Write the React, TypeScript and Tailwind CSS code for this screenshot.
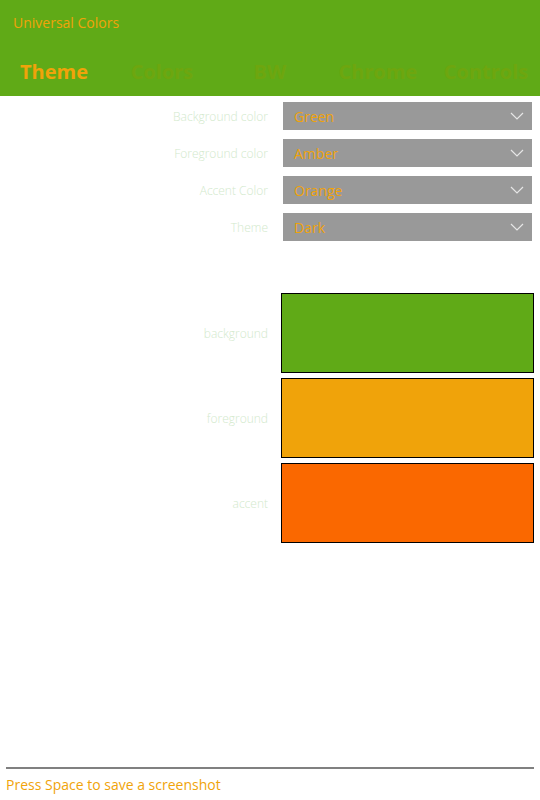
import React from 'react';

const selects = [
  { label: 'Background color', value: 'Green' },
  { label: 'Foreground color', value: 'Amber' },
  { label: 'Accent Color', value: 'Orange' },
  { label: 'Theme', value: 'Dark' },
];

const swatches = [
  { label: 'background', color: 'bg-[#60aa17]' },
  { label: 'foreground', color: 'bg-[#f0a30a]' },
  { label: 'accent', color: 'bg-[#fa6800]' },
];

const tabs = ['Theme', 'Colors', 'BW', 'Chrome', 'Controls'];

const Chevron = () => (
  <svg width="14" height="8" viewBox="0 0 14 8" fill="none">
    <path d="M1 1l6 6 6-6" stroke="#e6e6e6" strokeWidth="1.2" />
  </svg>
);

const App: React.FC = () => {
  return (
    <div className="w-[540px] h-[800px] bg-white flex flex-col font-['Open_Sans',sans-serif]">
      <div className="h-[96px] bg-[#60aa17] flex flex-col">
        <div className="h-[44px] pl-[13px] flex items-center text-[14px] text-[#f0a30a]">Universal Colors</div>
        <div className="flex items-center h-[52px] pt-[4px] text-[20px] font-bold">
          {tabs.map((t, i) => (
            <div
              key={t}
              className={`flex-1 text-center ${i === 0 ? 'text-[#f0a30a]' : 'text-[#6ea60f]'}`}
            >
              {t}
            </div>
          ))}
        </div>
      </div>

      <div className="flex flex-col gap-[9px] pt-[6px]">
        {selects.map((s) => (
          <div key={s.label} className="flex items-center">
            <div className="w-[269px] pr-[1px] pt-[2px] text-right text-[12px] font-light text-[#d2e9cc]">
              {s.label}
            </div>
            <div className="ml-[14px] w-[249px] h-[28px] bg-[#999999] flex items-center justify-between pl-[11px] pr-[8px]">
              <span className="text-[14px] text-[#f0a30a]">{s.value}</span>
              <Chevron />
            </div>
          </div>
        ))}
      </div>

      <div className="flex flex-col gap-[5px] mt-[52px]">
        {swatches.map((s) => (
          <div key={s.label} className="flex items-center">
            <div className="w-[268px] pt-[2px] text-right text-[12px] font-light text-[#d2e9cc]">
              {s.label}
            </div>
            <div className={`ml-[13px] w-[253px] h-[80px] border border-black ${s.color}`} />
          </div>
        ))}
      </div>

      <div className="flex-1" />
      <div className="mx-[6px] h-[2px] bg-[#808080]" />
      <div className="h-[31px] pl-[6px] flex items-center text-[14px] text-[#f0a30a]">
        Press Space to save a screenshot
      </div>
    </div>
  );
};

export default App;
